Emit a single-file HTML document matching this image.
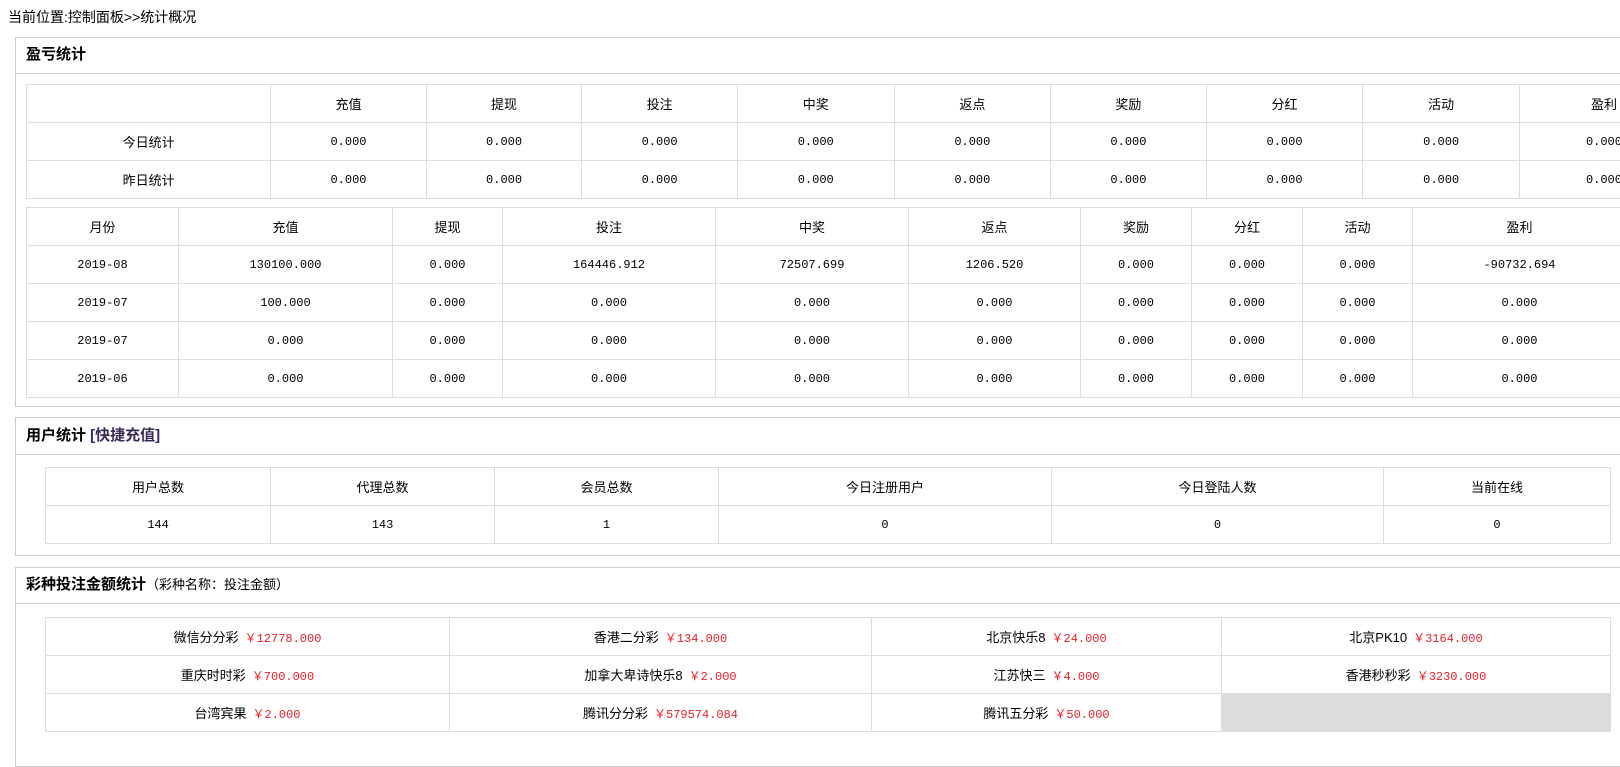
<!DOCTYPE html>
<html><head><meta charset="utf-8"><style>
*{margin:0;padding:0;box-sizing:border-box}
body{width:1620px;height:736px;overflow:hidden;background:#fff;font-family:"Liberation Sans","Noto Sans CJK SC",sans-serif;font-size:13px;color:#000;position:relative}
.crumb{position:absolute;left:8px;top:7px;font-size:14px}
.panel{position:absolute;left:15px;width:1700px;border:1px solid #ccc;border-right:none}
.ph{position:absolute;left:0;right:0;top:0;border-bottom:1px solid #ccc;font-weight:bold;font-size:15px;padding-left:10px}
table{position:absolute;border-collapse:collapse;table-layout:fixed}
td{border:1px solid #ddd;text-align:center;height:38px;font-size:13px;white-space:nowrap;overflow:hidden}
.n{font-family:"Liberation Mono","Noto Sans CJK SC",monospace;font-size:12px}
.r{color:#e8202a;font-family:"Liberation Mono","Noto Sans CJK SC",monospace;font-size:12px;margin-left:6px}
.g{background:#ddd}
</style></head><body>
<div class="crumb">当前位置:控制面板&gt;&gt;统计概况</div>

<div class="panel" style="top:37px;height:370px">
<div class="ph" style="height:36px;line-height:34px">盈亏统计</div>
</div>
<table style="left:26px;top:84px;width:1663px">
<colgroup><col style="width:237px"><col style="width:151px"><col style="width:151px"><col style="width:151px"><col style="width:152px"><col style="width:152px"><col style="width:151px"><col style="width:152px"><col style="width:152px"><col style="width:164px"></colgroup>
<tr style="height:37px"><td></td><td>充值</td><td>提现</td><td>投注</td><td>中奖</td><td>返点</td><td>奖励</td><td>分红</td><td>活动</td><td>盈利</td></tr>
<tr><td>今日统计</td><td class="n">0.000</td><td class="n">0.000</td><td class="n">0.000</td><td class="n">0.000</td><td class="n">0.000</td><td class="n">0.000</td><td class="n">0.000</td><td class="n">0.000</td><td class="n">0.000</td></tr>
<tr><td>昨日统计</td><td class="n">0.000</td><td class="n">0.000</td><td class="n">0.000</td><td class="n">0.000</td><td class="n">0.000</td><td class="n">0.000</td><td class="n">0.000</td><td class="n">0.000</td><td class="n">0.000</td></tr>
</table>
<table style="left:26px;top:207px;width:1600px">
<colgroup><col style="width:152px"><col style="width:214px"><col style="width:110px"><col style="width:213px"><col style="width:193px"><col style="width:172px"><col style="width:111px"><col style="width:111px"><col style="width:110px"><col style="width:214px"></colgroup>
<tr style="height:36px"><td>月份</td><td>充值</td><td>提现</td><td>投注</td><td>中奖</td><td>返点</td><td>奖励</td><td>分红</td><td>活动</td><td>盈利</td></tr>
<tr><td class="n">2019-08</td><td class="n">130100.000</td><td class="n">0.000</td><td class="n">164446.912</td><td class="n">72507.699</td><td class="n">1206.520</td><td class="n">0.000</td><td class="n">0.000</td><td class="n">0.000</td><td class="n">-90732.694</td></tr>
<tr><td class="n">2019-07</td><td class="n">100.000</td><td class="n">0.000</td><td class="n">0.000</td><td class="n">0.000</td><td class="n">0.000</td><td class="n">0.000</td><td class="n">0.000</td><td class="n">0.000</td><td class="n">0.000</td></tr>
<tr><td class="n">2019-07</td><td class="n">0.000</td><td class="n">0.000</td><td class="n">0.000</td><td class="n">0.000</td><td class="n">0.000</td><td class="n">0.000</td><td class="n">0.000</td><td class="n">0.000</td><td class="n">0.000</td></tr>
<tr><td class="n">2019-06</td><td class="n">0.000</td><td class="n">0.000</td><td class="n">0.000</td><td class="n">0.000</td><td class="n">0.000</td><td class="n">0.000</td><td class="n">0.000</td><td class="n">0.000</td><td class="n">0.000</td></tr>
</table>

<div class="panel" style="top:417px;height:139px">
<div class="ph" style="height:37px;line-height:35px">用户统计 <span style="color:#3a2a5a">[快捷充值]</span></div>
</div>
<table style="left:45px;top:467px;width:1565px">
<colgroup><col style="width:225px"><col style="width:224px"><col style="width:224px"><col style="width:333px"><col style="width:332px"><col style="width:227px"></colgroup>
<tr style="height:36px"><td>用户总数</td><td>代理总数</td><td>会员总数</td><td>今日注册用户</td><td>今日登陆人数</td><td>当前在线</td></tr>
<tr><td class="n">144</td><td class="n">143</td><td class="n">1</td><td class="n">0</td><td class="n">0</td><td class="n">0</td></tr>
</table>

<div class="panel" style="top:567px;height:200px">
<div class="ph" style="height:36px;line-height:34px">彩种投注金额统计<span style="font-weight:normal;font-size:13px">（彩种名称：投注金额）</span></div>
</div>
<table style="left:45px;top:617px;width:1565px">
<colgroup><col style="width:404px"><col style="width:422px"><col style="width:350px"><col style="width:389px"></colgroup>
<tr><td>微信分分彩<span class="r">￥12778.000</span></td><td>香港二分彩<span class="r">￥134.000</span></td><td>北京快乐8<span class="r">￥24.000</span></td><td>北京PK10<span class="r">￥3164.000</span></td></tr>
<tr><td>重庆时时彩<span class="r">￥700.000</span></td><td>加拿大卑诗快乐8<span class="r">￥2.000</span></td><td>江苏快三<span class="r">￥4.000</span></td><td>香港秒秒彩<span class="r">￥3230.000</span></td></tr>
<tr><td>台湾宾果<span class="r">￥2.000</span></td><td>腾讯分分彩<span class="r">￥579574.084</span></td><td>腾讯五分彩<span class="r">￥50.000</span></td><td class="g"></td></tr>
</table>
</body></html>
